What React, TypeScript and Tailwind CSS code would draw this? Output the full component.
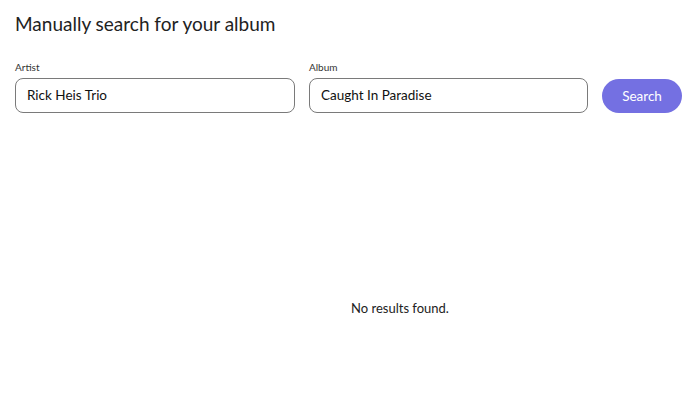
export default function App() {
  return (
    <div className="w-[690px] h-[407px] bg-white text-[#222] font-['Lato',sans-serif] pl-[15px] pr-[8px] pt-[11px]">
      <h1 className="text-[19px] leading-[26px] text-[#222]">Manually search for your album</h1>
      <div className="flex items-end gap-[14px] mt-[24px]">
        <div className="flex flex-col w-[280px] shrink-0">
          <label className="text-[10px] leading-[13px] text-[#333] mb-[4px]">Artist</label>
          <div className="h-[35px] border border-[#7a7a7a] rounded-[8px] flex items-center px-[11px] text-[13.5px] text-[#111]">Rick Heis Trio</div>
        </div>
        <div className="flex flex-col w-[279px] shrink-0">
          <label className="text-[10px] leading-[13px] text-[#333] mb-[4px]">Album</label>
          <div className="h-[35px] border border-[#7a7a7a] rounded-[8px] flex items-center px-[11px] text-[13.5px] text-[#111]">Caught In Paradise</div>
        </div>
        <button className="w-[80px] h-[34px] shrink-0 rounded-full bg-[#7470e2] text-white text-[13.5px]">Search</button>
      </div>
      <div className="flex justify-center pl-[103px] mt-[186px] text-[13px] text-[#222]">No results found.</div>
    </div>
  );
}
